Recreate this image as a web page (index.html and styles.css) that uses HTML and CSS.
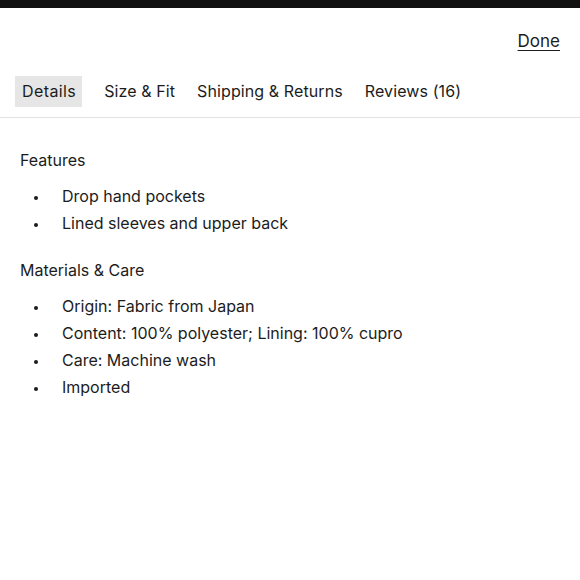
FILE: index.html
```html
<!DOCTYPE html>
<html>
<head>
<meta charset="utf-8">
<link rel="stylesheet" href="styles.css">
</head>
<body>
<div class="topbar"></div>
<div class="header">
  <a class="done" href="#">Done</a>
</div>
<nav class="tabs">
  <span class="tab active">Details</span>
  <span class="tab">Size &amp; Fit</span>
  <span class="tab">Shipping &amp; Returns</span>
  <span class="tab">Reviews (16)</span>
</nav>
<main class="content">
  <h2 class="section-title">Features</h2>
  <ul class="list">
    <li>Drop hand pockets</li>
    <li>Lined sleeves and upper back</li>
  </ul>
  <h2 class="section-title">Materials &amp; Care</h2>
  <ul class="list">
    <li>Origin: Fabric from Japan</li>
    <li>Content: 100% polyester; Lining: 100% cupro</li>
    <li>Care: Machine wash</li>
    <li>Imported</li>
  </ul>
</main>
</body>
</html>
```
FILE: styles.css
```css
* { box-sizing: border-box; }
body {
  margin: 0;
  background: #fff;
  color: #1c1c1c;
  font-family: Inter, "Noto Sans", sans-serif;
  font-size: 16px;
}
.topbar {
  height: 8px;
  background: #111;
}
.header {
  display: flex;
  justify-content: flex-end;
  padding: 22px 20px 0 0;
  height: 60px;
}
.done {
  color: #1c1c1c;
  font-size: 17px;
  text-decoration: underline;
  text-underline-offset: 3px;
  line-height: 22px;
}
.tabs {
  display: flex;
  gap: 8px;
  padding: 8px 15px 10px;
  border-bottom: 1px solid #e2e2e2;
}
.tab {
  padding: 0 7px;
  line-height: 31px;
  font-size: 16px;
  letter-spacing: 0.1px;
}
.tab.active {
  background: #e6e6e6;
  padding: 0 6px 0 7px;
  margin-right: 7px;
  letter-spacing: 0.4px;
}
.content {
  padding: 31px 20px 0;
}
.section-title {
  margin: 0 0 12px;
  font-size: 16px;
  font-weight: 400;
  line-height: 22px;
}
.list {
  list-style: none;
  margin: 0 0 22px;
  padding: 0;
}
.list li {
  display: flex;
  align-items: center;
  line-height: 27px;
}
.list li::before {
  content: "";
  width: 4px;
  height: 4px;
  border-radius: 50%;
  background: #1c1c1c;
  margin: 2px 24px 0 14px;
  flex: none;
}
```
